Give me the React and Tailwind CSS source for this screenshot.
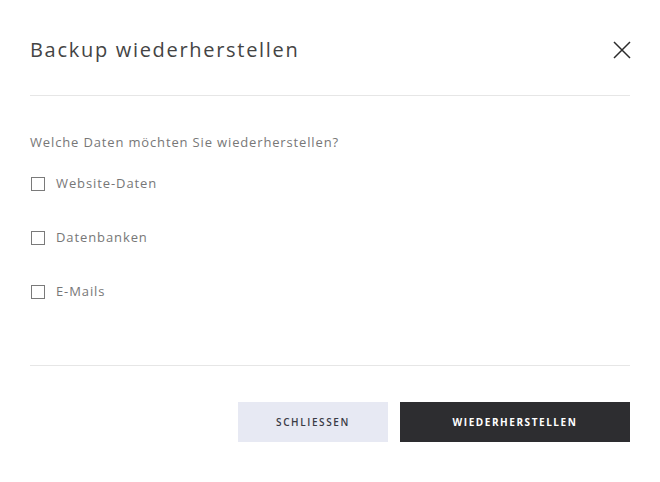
const options = ["Website-Daten", "Datenbanken", "E-Mails"];

const CloseIcon = () => (
  <svg width="18" height="18" viewBox="0 0 18 18" fill="none">
    <path d="M1 1l16 16M17 1L1 17" stroke="#2b2b2b" strokeWidth="1.5" />
  </svg>
);

export default function App() {
  return (
    <div className="w-[660px] h-[482px] bg-white px-[30px] pt-[30px] font-['Open_Sans',sans-serif]">
      <div className="h-[40px] flex items-center justify-between">
        <h1 className="text-[20px] text-[#444] tracking-[1.7px] font-normal leading-none">
          Backup wiederherstellen
        </h1>
        <button className="mr-[-1px]">
          <CloseIcon />
        </button>
      </div>
      <div className="mt-[25px] h-px bg-[#e6e6e6]" />

      <p className="mt-[36px] h-[20px] leading-[20px] text-[13px] text-[#777] tracking-[0.85px]">
        Welche Daten möchten Sie wiederherstellen?
      </p>

      <div className="mt-[22px] flex flex-col gap-[34px]">
        {options.map((label) => (
          <label key={label} className="h-[20px] flex items-center">
            <span className="ml-[1px] w-[14px] h-[14px] border border-[#7a7a7a] bg-white" />
            <span className="ml-[11px] text-[13px] text-[#777] tracking-[0.9px]">
              {label}
            </span>
          </label>
        ))}
      </div>

      <div className="mt-[63px] h-px bg-[#e6e6e6]" />

      <div className="mt-[36px] flex justify-end gap-[12px]">
        <button className="w-[150px] h-[40px] bg-[#e7e9f3] text-[#3a3b45] text-[10px] font-semibold tracking-[1.6px]">
          SCHLIESSEN
        </button>
        <button className="w-[230px] h-[40px] bg-[#2d2d30] text-white text-[10px] font-bold tracking-[1.55px]">
          WIEDERHERSTELLEN
        </button>
      </div>
    </div>
  );
}
